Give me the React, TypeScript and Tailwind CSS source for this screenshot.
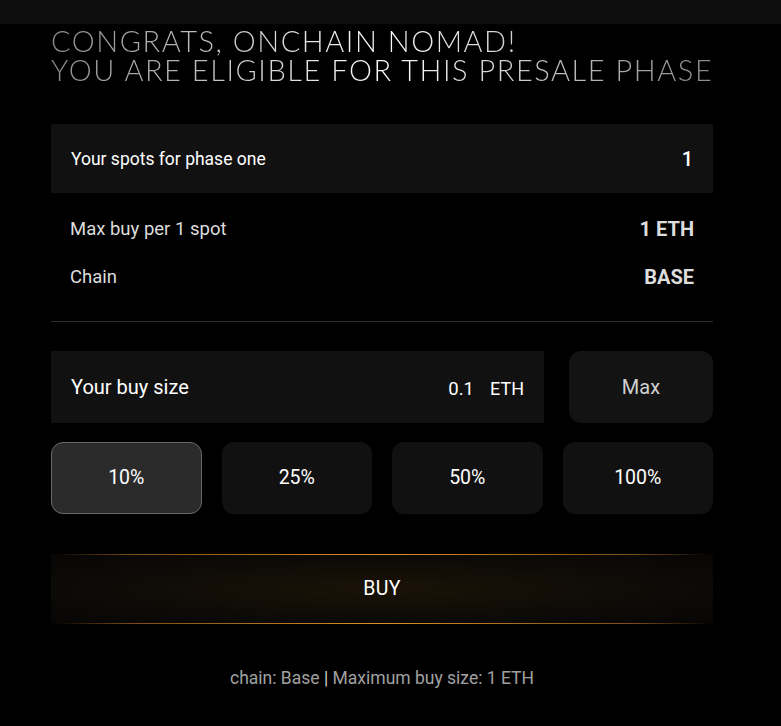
import { useState } from "react";

const percents = ["10%", "25%", "50%", "100%"];

export default function App() {
	const [active, setActive] = useState("10%");

	return (
		<div className="min-h-screen w-full bg-black font-['Roboto',sans-serif] text-white">
			<div className="h-6 w-full bg-[#0e0e0e]" />

			<div className="ml-[51px] w-[662px] pt-[2px]">
				<h1 className="whitespace-nowrap font-['Lato',sans-serif] text-[29px] font-light uppercase leading-[29px] tracking-[0.053em] bg-gradient-to-r from-[#8a8a8a] via-white to-[#8a8a8a] bg-clip-text text-transparent">
					<span className="block">Congrats, onchain nomad!</span>
					<span className="block">You are eligible for this presale phase</span>
				</h1>

				<div className="mt-[40px] flex h-[69px] items-center justify-between bg-[#111111] px-5">
					<span className="text-[17.5px] leading-[26px]">Your spots for phase one</span>
					<span className="text-[20px] leading-[28px] font-medium">1</span>
				</div>

				<div className="flex flex-col gap-5 px-[19px] pt-[22px] pb-[30px] text-[#dddddd]">
					<div className="flex h-[28px] items-center justify-between">
						<span className="text-[18.5px] leading-[28px]">Max buy per 1 spot</span>
						<span className="text-[20px] leading-[28px] font-bold">1 ETH</span>
					</div>
					<div className="flex h-[28px] items-center justify-between">
						<span className="text-[18.5px] leading-[28px]">Chain</span>
						<span className="text-[20px] leading-[28px] font-bold">BASE</span>
					</div>
				</div>

				<div className="h-px w-full bg-[#2e2e2e]" />

				<div className="mt-[29px] flex gap-[25px]">
					<div className="flex h-[72px] flex-1 items-center justify-between bg-[#111111] px-5">
						<span className="text-[20px] leading-[28px]">Your buy size</span>
						<div className="flex items-center gap-4 pt-[3px]">
							<span className="text-[18.5px] leading-[28px]">0.1</span>
							<span className="text-[18px] leading-[28px]">ETH</span>
						</div>
					</div>
					<button className="h-[72px] w-[144px] rounded-xl bg-[#131313] text-[20px] leading-[28px] text-[#d0d0d0]">
						Max
					</button>
				</div>

				<div className="mt-[19px] grid grid-cols-4 gap-5">
					{percents.map((p) => (
						<button
							key={p}
							onClick={() => setActive(p)}
							className={
								active === p
									? "h-[72px] rounded-xl border border-[#6a6a6a] bg-[#2b2b2b] text-[19.5px] leading-[28px] text-white"
									: "h-[72px] rounded-xl border border-transparent bg-[#111111] text-[19.5px] leading-[28px] text-white"
							}
						>
							{p}
						</button>
					))}
				</div>

				<div className="mt-[40px] flex flex-col">
					<div className="h-px w-full bg-[linear-gradient(90deg,transparent,#7a4c15_12%,#e0902a_50%,#7a4c15_88%,transparent)]" />
					<button className="flex h-[68px] w-full items-center justify-center bg-[radial-gradient(ellipse_at_center,#1a1206_0%,#0d0b07_60%,#070605_100%)] text-[19.5px] leading-[28px] tracking-[0.02em] text-white">
						BUY
					</button>
					<div className="h-px w-full bg-[linear-gradient(90deg,transparent,#7a4c15_12%,#e0902a_50%,#7a4c15_88%,transparent)]" />
				</div>

				<p className="mt-[41px] text-center text-[17.5px] leading-[26px] text-[#a0a0a0]">
					chain: Base <span className="text-[#cfcfcf]">|</span> Maximum buy size: 1 ETH
				</p>
			</div>
		</div>
	);
}
